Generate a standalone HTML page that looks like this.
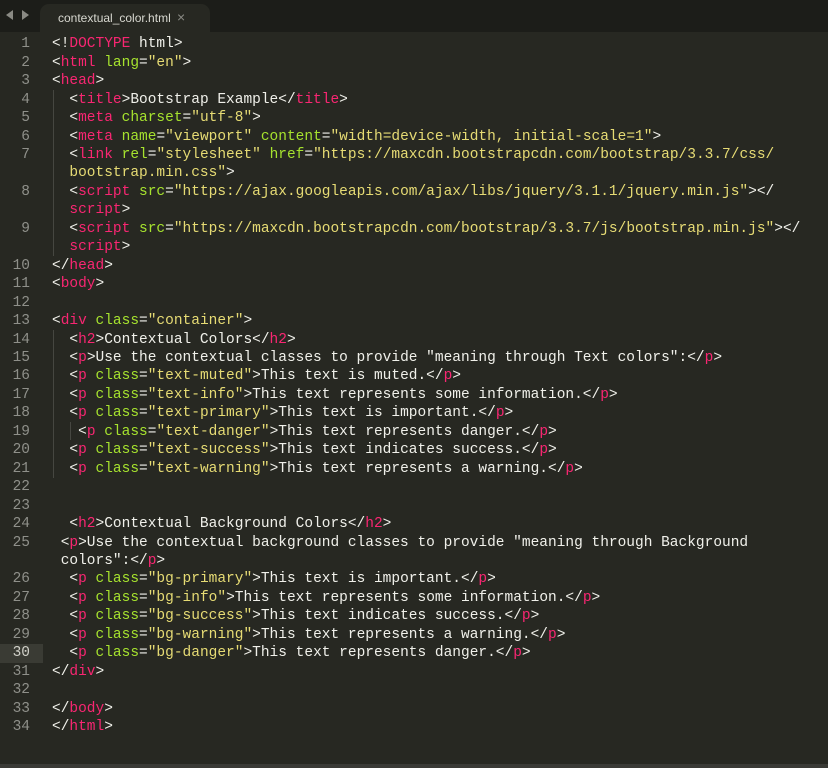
<!DOCTYPE html>
<html><head><meta charset="utf-8"><style>
html,body{margin:0;padding:0;}
body{width:828px;height:768px;background:#272822;overflow:hidden;position:relative;font-family:"Liberation Mono",monospace;}
#bar{position:absolute;left:0;top:0;width:828px;height:32px;background:#1c1d19;}
#tab{position:absolute;left:40px;top:4px;width:170px;height:28px;background:#272822;border-radius:9px 9px 0 0;}
#tab span{position:absolute;left:18px;top:7px;font:12px "Liberation Sans",sans-serif;color:#d8d8d0;}
#tab b{position:absolute;left:137px;top:5px;font:14px "Liberation Sans",sans-serif;color:#8a8a84;font-weight:normal;}
.arr{position:absolute;top:10px;width:0;height:0;border-top:5px solid transparent;border-bottom:5px solid transparent;}
#gut{position:absolute;left:0;top:35.3px;width:30px;text-align:right;font-size:14.5px;line-height:18.46px;color:#8f908a;white-space:pre;}
#hl{position:absolute;left:0;top:644px;width:43px;height:18.5px;background:#3a3b34;}
#code{position:absolute;left:52px;top:35.3px;font-size:14.5px;line-height:18.46px;color:#f0f0ea;white-space:pre;margin:0;font-family:"Liberation Mono",monospace;}
.t{color:#f92672}.a{color:#a6e22e}.s{color:#e6db74}
.g{position:absolute;width:1px;background:#464741;}
#bot{position:absolute;left:0;top:764px;width:828px;height:4px;background:#3a3a36;}
</style></head><body>
<div id="bar"><div class="arr" style="left:6px;border-right:7px solid #8a8a84"></div><div class="arr" style="left:22px;border-left:7px solid #8a8a84"></div>
<div id="tab"><span>contextual_color.html</span><b>×</b></div></div>
<div id="hl"></div>
<div class="g" style="left:53px;top:90px;height:166px"></div>
<div class="g" style="left:53px;top:330px;height:148px"></div>
<div class="g" style="left:70px;top:422px;height:18px"></div>
<div id="gut">1
2
3
4
5
6
7

8

9

10
11
12
13
14
15
16
17
18
19
20
21
22
23
24
25

26
27
28
29
<span style="color:#d0d0c8">30</span>
31
32
33
34</div>
<pre id="code">&lt;!<span class="t">DOCTYPE</span> html&gt;
&lt;<span class="t">html</span> <span class="a">lang</span>=<span class="s">"en"</span>&gt;
&lt;<span class="t">head</span>&gt;
  &lt;<span class="t">title</span>&gt;Bootstrap Example&lt;/<span class="t">title</span>&gt;
  &lt;<span class="t">meta</span> <span class="a">charset</span>=<span class="s">"utf-8"</span>&gt;
  &lt;<span class="t">meta</span> <span class="a">name</span>=<span class="s">"viewport"</span> <span class="a">content</span>=<span class="s">"width=device-width, initial-scale=1"</span>&gt;
  &lt;<span class="t">link</span> <span class="a">rel</span>=<span class="s">"stylesheet"</span> <span class="a">href</span>=<span class="s">"https://maxcdn.bootstrapcdn.com/bootstrap/3.3.7/css/</span>
  <span class="s">bootstrap.min.css"</span>&gt;
  &lt;<span class="t">script</span> <span class="a">src</span>=<span class="s">"https://ajax.googleapis.com/ajax/libs/jquery/3.1.1/jquery.min.js"</span>&gt;&lt;/
  <span class="t">script</span>&gt;
  &lt;<span class="t">script</span> <span class="a">src</span>=<span class="s">"https://maxcdn.bootstrapcdn.com/bootstrap/3.3.7/js/bootstrap.min.js"</span>&gt;&lt;/
  <span class="t">script</span>&gt;
&lt;/<span class="t">head</span>&gt;
&lt;<span class="t">body</span>&gt;

&lt;<span class="t">div</span> <span class="a">class</span>=<span class="s">"container"</span>&gt;
  &lt;<span class="t">h2</span>&gt;Contextual Colors&lt;/<span class="t">h2</span>&gt;
  &lt;<span class="t">p</span>&gt;Use the contextual classes to provide "meaning through Text colors":&lt;/<span class="t">p</span>&gt;
  &lt;<span class="t">p</span> <span class="a">class</span>=<span class="s">"text-muted"</span>&gt;This text is muted.&lt;/<span class="t">p</span>&gt;
  &lt;<span class="t">p</span> <span class="a">class</span>=<span class="s">"text-info"</span>&gt;This text represents some information.&lt;/<span class="t">p</span>&gt;
  &lt;<span class="t">p</span> <span class="a">class</span>=<span class="s">"text-primary"</span>&gt;This text is important.&lt;/<span class="t">p</span>&gt;
   &lt;<span class="t">p</span> <span class="a">class</span>=<span class="s">"text-danger"</span>&gt;This text represents danger.&lt;/<span class="t">p</span>&gt;
  &lt;<span class="t">p</span> <span class="a">class</span>=<span class="s">"text-success"</span>&gt;This text indicates success.&lt;/<span class="t">p</span>&gt;
  &lt;<span class="t">p</span> <span class="a">class</span>=<span class="s">"text-warning"</span>&gt;This text represents a warning.&lt;/<span class="t">p</span>&gt;


  &lt;<span class="t">h2</span>&gt;Contextual Background Colors&lt;/<span class="t">h2</span>&gt;
 &lt;<span class="t">p</span>&gt;Use the contextual background classes to provide "meaning through Background
 colors":&lt;/<span class="t">p</span>&gt;
  &lt;<span class="t">p</span> <span class="a">class</span>=<span class="s">"bg-primary"</span>&gt;This text is important.&lt;/<span class="t">p</span>&gt;
  &lt;<span class="t">p</span> <span class="a">class</span>=<span class="s">"bg-info"</span>&gt;This text represents some information.&lt;/<span class="t">p</span>&gt;
  &lt;<span class="t">p</span> <span class="a">class</span>=<span class="s">"bg-success"</span>&gt;This text indicates success.&lt;/<span class="t">p</span>&gt;
  &lt;<span class="t">p</span> <span class="a">class</span>=<span class="s">"bg-warning"</span>&gt;This text represents a warning.&lt;/<span class="t">p</span>&gt;
  &lt;<span class="t">p</span> <span class="a">class</span>=<span class="s">"bg-danger"</span>&gt;This text represents danger.&lt;/<span class="t">p</span>&gt;
&lt;/<span class="t">div</span>&gt;

&lt;/<span class="t">body</span>&gt;
&lt;/<span class="t">html</span>&gt;</pre>
<div id="bot"></div>
</body></html>
